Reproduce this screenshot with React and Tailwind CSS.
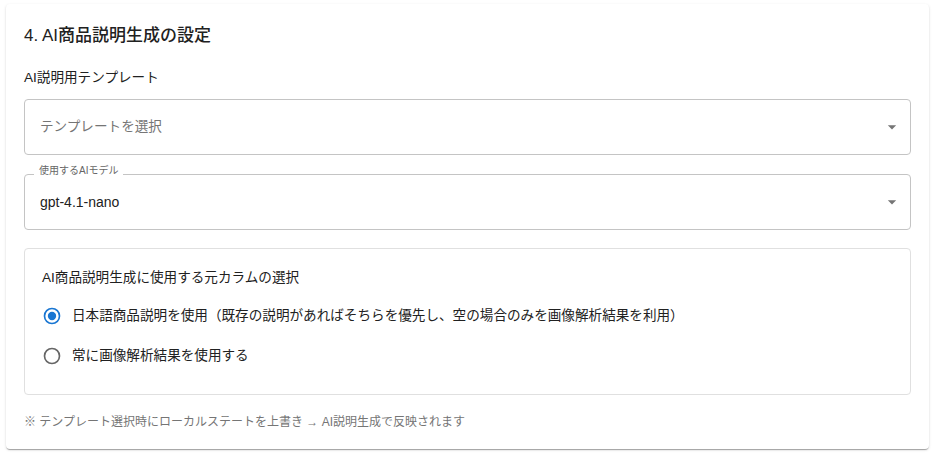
import { useState } from "react";

const FONT = { fontFamily: '"Liberation Sans", "Noto Sans CJK JP", sans-serif' };

function Caret() {
  return (
    <svg className="absolute right-[8px] top-1/2 -translate-y-1/2 w-[20px] h-[20px]" viewBox="0 0 24 24">
      <path d="M7 10l5 5 5-5z" fill="#757575" />
    </svg>
  );
}

function RadioIcon({ checked }) {
  return (
    <svg className="w-[20px] h-[20px] shrink-0" viewBox="0 0 24 24">
      <circle cx="12" cy="12" r="9" fill="none" stroke={checked ? "#1976d2" : "#666666"} strokeWidth="2" />
      {checked && <circle cx="12" cy="12" r="5" fill="#1976d2" />}
    </svg>
  );
}

export default function App() {
  const [source, setSource] = useState("ja");

  const options = [
    { id: "ja", label: "日本語商品説明を使用（既存の説明があればそちらを優先し、空の場合のみを画像解析結果を利用）" },
    { id: "img", label: "常に画像解析結果を使用する" },
  ];

  return (
    <div className="min-h-screen bg-white pl-[6px] pt-[4px]" style={FONT}>
      <div className="w-[923px] rounded-[4px] bg-white px-[18px] pt-[20px] pb-[18px] shadow-[0_2px_1px_-1px_rgba(0,0,0,0.2),0_1px_1px_0_rgba(0,0,0,0.14),0_1px_3px_0_rgba(0,0,0,0.12)]">
        <h2 className="text-[17px] leading-[24px] font-medium text-[#212121]">4. AI商品説明生成の設定</h2>

        <p className="mt-[20px] text-[13.6px] leading-[20px] text-[#212121]">AI説明用テンプレート</p>

        {/* template select */}
        <div className="relative mt-[11px] h-[56px] rounded-[4px] border border-[#c4c4c4] flex items-center pl-[15px]">
          <span className="text-[13.6px] text-[#757575]">テンプレートを選択</span>
          <Caret />
        </div>

        {/* model select */}
        <div className="relative mt-[19px] h-[56px] rounded-[4px] border border-[#c4c4c4] flex items-center pl-[15px]">
          <span className="absolute left-[9px] top-[-10px] bg-white px-[5px] text-[10px] leading-[12px] text-[#666666]">使用するAIモデル</span>
          <span className="text-[14px] text-[#212121]">gpt-4.1-nano</span>
          <Caret />
        </div>

        {/* source column */}
        <div className="mt-[18px] rounded-[4px] border border-[#e0e0e0] pl-[17px] pt-[19px] pb-[18px]">
          <p className="text-[13.6px] leading-[20px] text-[#212121]">AI商品説明生成に使用する元カラムの選択</p>
          <div className="mt-[8px] flex flex-col">
            {options.map((o) => (
              <label key={o.id} className="flex h-[40px] items-center gap-[10px] cursor-pointer" onClick={() => setSource(o.id)}>
                <RadioIcon checked={source === o.id} />
                <span className="text-[13.6px] text-[#212121]">{o.label}</span>
              </label>
            ))}
          </div>
        </div>

        <p className="mt-[18px] text-[12px] leading-[18px] text-[#757575]">※ テンプレート選択時にローカルステートを上書き → AI説明生成で反映されます</p>
      </div>
    </div>
  );
}
